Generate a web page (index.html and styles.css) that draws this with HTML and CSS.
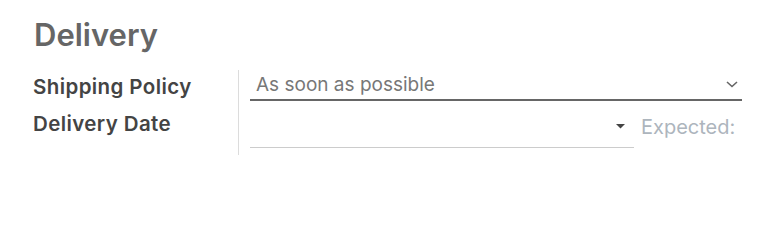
FILE: index.html
```html
<!DOCTYPE html>
<html>
<head>
<meta charset="utf-8">
<link rel="stylesheet" href="styles.css">
</head>
<body>
<div class="group">
  <h2 class="sep">Delivery</h2>
  <div class="grid">
    <div class="labels">
      <div class="label">Shipping Policy</div>
      <div class="label">Delivery Date</div>
    </div>
    <div class="fields">
      <div class="select">
        <span class="value">As soon as possible</span>
        <svg class="chev" width="12" height="7" viewBox="0 0 12 7"><polyline points="1,1 6,5.5 11,1" fill="none" stroke="#666" stroke-width="1.6"/></svg>
      </div>
      <div class="daterow">
        <div class="date">
          <svg class="caret" width="9" height="5" viewBox="0 0 9 5"><polygon points="0,0 9,0 4.5,4.5" fill="#444"/></svg>
        </div>
        <span class="expected">Expected:</span>
      </div>
    </div>
  </div>
</div>
</body>
</html>
```

FILE: styles.css
```css
html, body {
  margin: 0;
  padding: 0;
  background: #fff;
}
body {
  font-family: Inter, Roboto, sans-serif;
  width: 765px;
  height: 226px;
  overflow: hidden;
}
.group {
  padding: 15px 23px 0 34px;
}
.sep {
  margin: 0;
  font-size: 31px;
  font-weight: 600;
  color: #666;
  line-height: 40px;
  height: 40px;
}
.grid {
  display: grid;
  grid-template-columns: 205px 1fr;
  margin-top: 15px;
  margin-left: -1px;
}
.labels {
  margin-top: -2px;
}
.label {
  font-size: 20.5px;
  font-weight: 600;
  letter-spacing: 0.4px;
  color: #444;
  line-height: 37px;
  height: 37px;
}
.fields {
  border-left: 1px solid #dcdcdc;
  padding-left: 11px;
  height: 85px;
}
.select {
  display: flex;
  align-items: center;
  justify-content: space-between;
  height: 29px;
  border-bottom: 2px solid #666;
  padding-left: 6px;
  padding-right: 4px;
}
.value {
  font-size: 19px;
  color: #777;
  line-height: 29px;
}
.chev {
  display: block;
}
.daterow {
  display: flex;
  align-items: flex-start;
  margin-top: 13px;
}
.date {
  width: 384px;
  height: 34px;
  border-bottom: 1px solid #ccc;
  display: flex;
  align-items: flex-start;
  justify-content: flex-end;
  padding-top: 10px;
  padding-right: 9px;
  box-sizing: border-box;
}
.caret {
  display: block;
}
.expected {
  margin-left: 7px;
  font-size: 20px;
  color: #adb5bd;
  line-height: 27px;
}
```
